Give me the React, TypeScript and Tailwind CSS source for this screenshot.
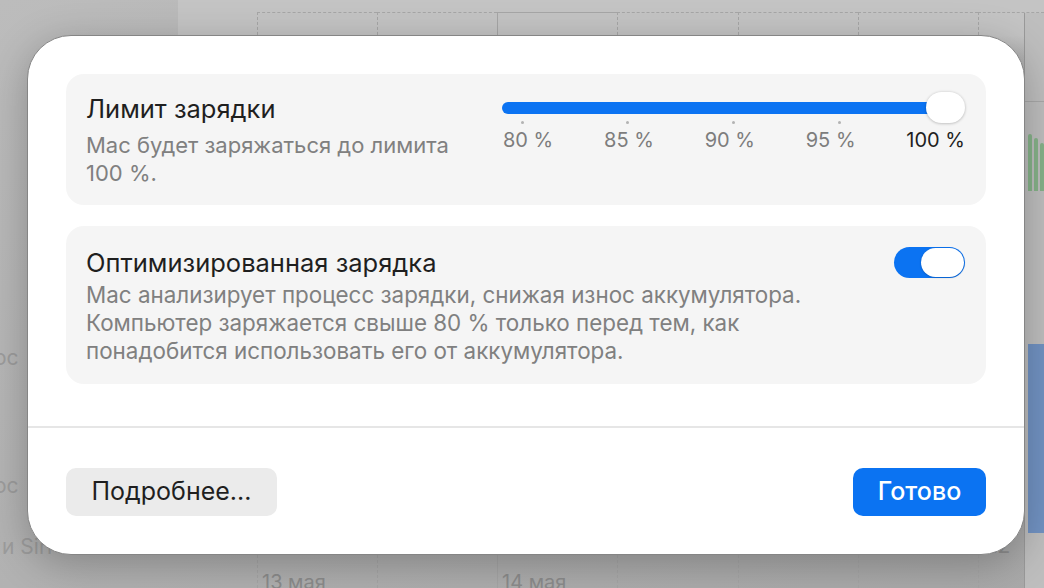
const BLUE = "bg-[#0b73f2]";

const TICKS = ["80 %", "85 %", "90 %", "95 %", "100 %"];

const COLUMNS = [
  { w: "w-[120px]", dashed: true, label: "13 мая" },
  { w: "w-[120px]", dashed: true, label: "" },
  { w: "w-[120px]", dashed: false, label: "14 мая" },
  { w: "w-[121px]", dashed: true, label: "" },
  { w: "w-[120px]", dashed: true, label: "" },
  { w: "w-[120px]", dashed: true, label: "" },
];

// the dimmed window behind the sheet
function Backdrop() {
  return (
    <div className="flex h-full">
      <div className="flex w-[180px] flex-col pt-[344px] text-[21px] leading-[28px] text-[#9c9c9c]">
        <div className="-ml-[6px]">ос</div>
        <div className="-ml-[6px] mt-[100px]">ос</div>
        <div className="ml-[2px] mt-[33px]">и Siri</div>
      </div>

      <div className="flex flex-1 flex-col bg-gradient-to-b from-[#c4c4c4] from-[6%] to-transparent to-[10%]">
        <div className="mt-[12px] flex flex-1 pl-[79px]">
          {COLUMNS.map((c, i) => (
            <div
              key={i}
              className={`flex ${c.w} flex-col border-l border-t border-[#a6a6a6] ${c.dashed ? "border-dashed" : ""}`}
            >
              {c.label && (
                <div className="mt-auto h-[18px] pl-[4px] text-[20px] leading-[24px] text-[#8c8c8c]">
                  {c.label}
                </div>
              )}
            </div>
          ))}
          <div className="flex flex-1 border-l border-t border-dashed border-[#a6a6a6]">
            <div className="flex w-[45px] flex-col">
              <div className="mb-[30px] mt-auto pl-[10px] text-[21px] leading-[24px] text-[#8f8f8f]">12</div>
            </div>
            <div className="flex flex-1 flex-col border-l border-[#9a9a9a] bg-[#bebebe]">
              <div className="mt-[88px] h-px bg-[#a8a8a8]" />
              <div className="ml-[3px] mt-[32px] flex h-[57px] items-end gap-[2px]">
                <div className="h-[57px] w-[4px] rounded-t-sm bg-[#86b289]" />
                <div className="h-[53px] w-[4px] rounded-t-sm bg-[#86b289]" />
                <div className="h-[48px] w-[4px] rounded-t-sm bg-[#86b289]" />
              </div>
              <div className="ml-[3px] mt-[153px] h-[189px] bg-[#7192c2]" />
            </div>
          </div>
        </div>
      </div>
    </div>
  );
}

function ChargeLimit() {
  return (
    <div className="flex h-[131px] rounded-[18px] bg-[#f5f5f5] pl-[20px] pr-[21px]">
      <div className="w-[400px] pt-[20px]">
        <div className="text-[25.5px] leading-[30px] text-[#1f1f1f]">Лимит зарядки</div>
        <div className="mt-[7px] text-[22px] leading-[28px] text-[#808080]">
          Mac будет заряжаться до лимита
          <br />
          100 %.
        </div>
      </div>

      <div className="ml-auto w-[463px] pt-[18px]">
        <div className="relative h-[31px]">
          <div className={`absolute left-0 right-[10px] top-[10px] h-[12px] rounded-full ${BLUE}`} />
          <div className="absolute right-0 top-0 h-[31px] w-[39px] rounded-full bg-white shadow-[0_0.5px_3px_rgba(0,0,0,0.28)]" />
        </div>
        <div className="-mt-[2px] flex justify-between px-[18.5px]">
          {TICKS.slice(0, 4).map((t) => (
            <div key={t} className="h-[3px] w-[3px] rounded-full bg-[#b3b3b3]" />
          ))}
          <div className="h-[3px] w-[3px]" />
        </div>
        <div className="mt-[4px] flex justify-between pl-[1px] text-[20px] leading-[24px] text-[#7d7d7d]">
          {TICKS.map((t, i) => (
            <span key={t} className={i === TICKS.length - 1 ? "text-[#1f1f1f]" : ""}>
              {t}
            </span>
          ))}
        </div>
      </div>
    </div>
  );
}

function OptimizedCharging() {
  return (
    <div className="mt-[21px] flex h-[158px] rounded-[18px] bg-[#f5f5f5] pl-[20px] pr-[21px]">
      <div className="pt-[22px]">
        <div className="text-[25.5px] leading-[30px] text-[#1f1f1f]">Оптимизированная зарядка</div>
        <div className="mt-[3px] whitespace-nowrap text-[22.4px] leading-[28px] text-[#808080]">
          Mac анализирует процесс зарядки, снижая износ аккумулятора.
          <br />
          Компьютер заряжается свыше 80 % только перед тем, как
          <br />
          понадобится использовать его от аккумулятора.
        </div>
      </div>
      <div className="ml-auto pt-[21px]">
        <div className={`flex h-[31px] w-[71px] items-center justify-end rounded-full p-[1px] ${BLUE}`}>
          <div className="h-[29px] w-[43px] rounded-full bg-white shadow-[0_0.5px_2px_rgba(0,0,0,0.25)]" />
        </div>
      </div>
    </div>
  );
}

export default function App() {
  return (
    <div className="relative h-[588px] w-[1044px] overflow-hidden bg-gradient-to-br from-[#bcbcbc] via-[#b2b2b2] to-[#a9a9a9] font-['Inter','Noto_Sans',sans-serif]">
      <Backdrop />

      <div className="absolute left-[27px] top-[35px] flex h-[520px] w-[998px] flex-col rounded-[44px] border border-[#858585] bg-white shadow-[0_10px_40px_rgba(0,0,0,0.25)]">
        <div className="px-[38px] pt-[38px]">
          <ChargeLimit />
          <OptimizedCharging />
        </div>

        <div className="mt-[42px] h-[2px] bg-[#e6e6e6]" />

        <div className="mt-[40px] flex justify-between px-[38px]">
          <button className="h-[48px] w-[211px] rounded-[10px] bg-[#ebebeb] text-[25px] text-[#1f1f1f]">
            Подробнее...
          </button>
          <button className={`h-[48px] w-[133px] rounded-[10px] text-[25px] font-medium text-white ${BLUE}`}>
            Готово
          </button>
        </div>
      </div>
    </div>
  );
}
